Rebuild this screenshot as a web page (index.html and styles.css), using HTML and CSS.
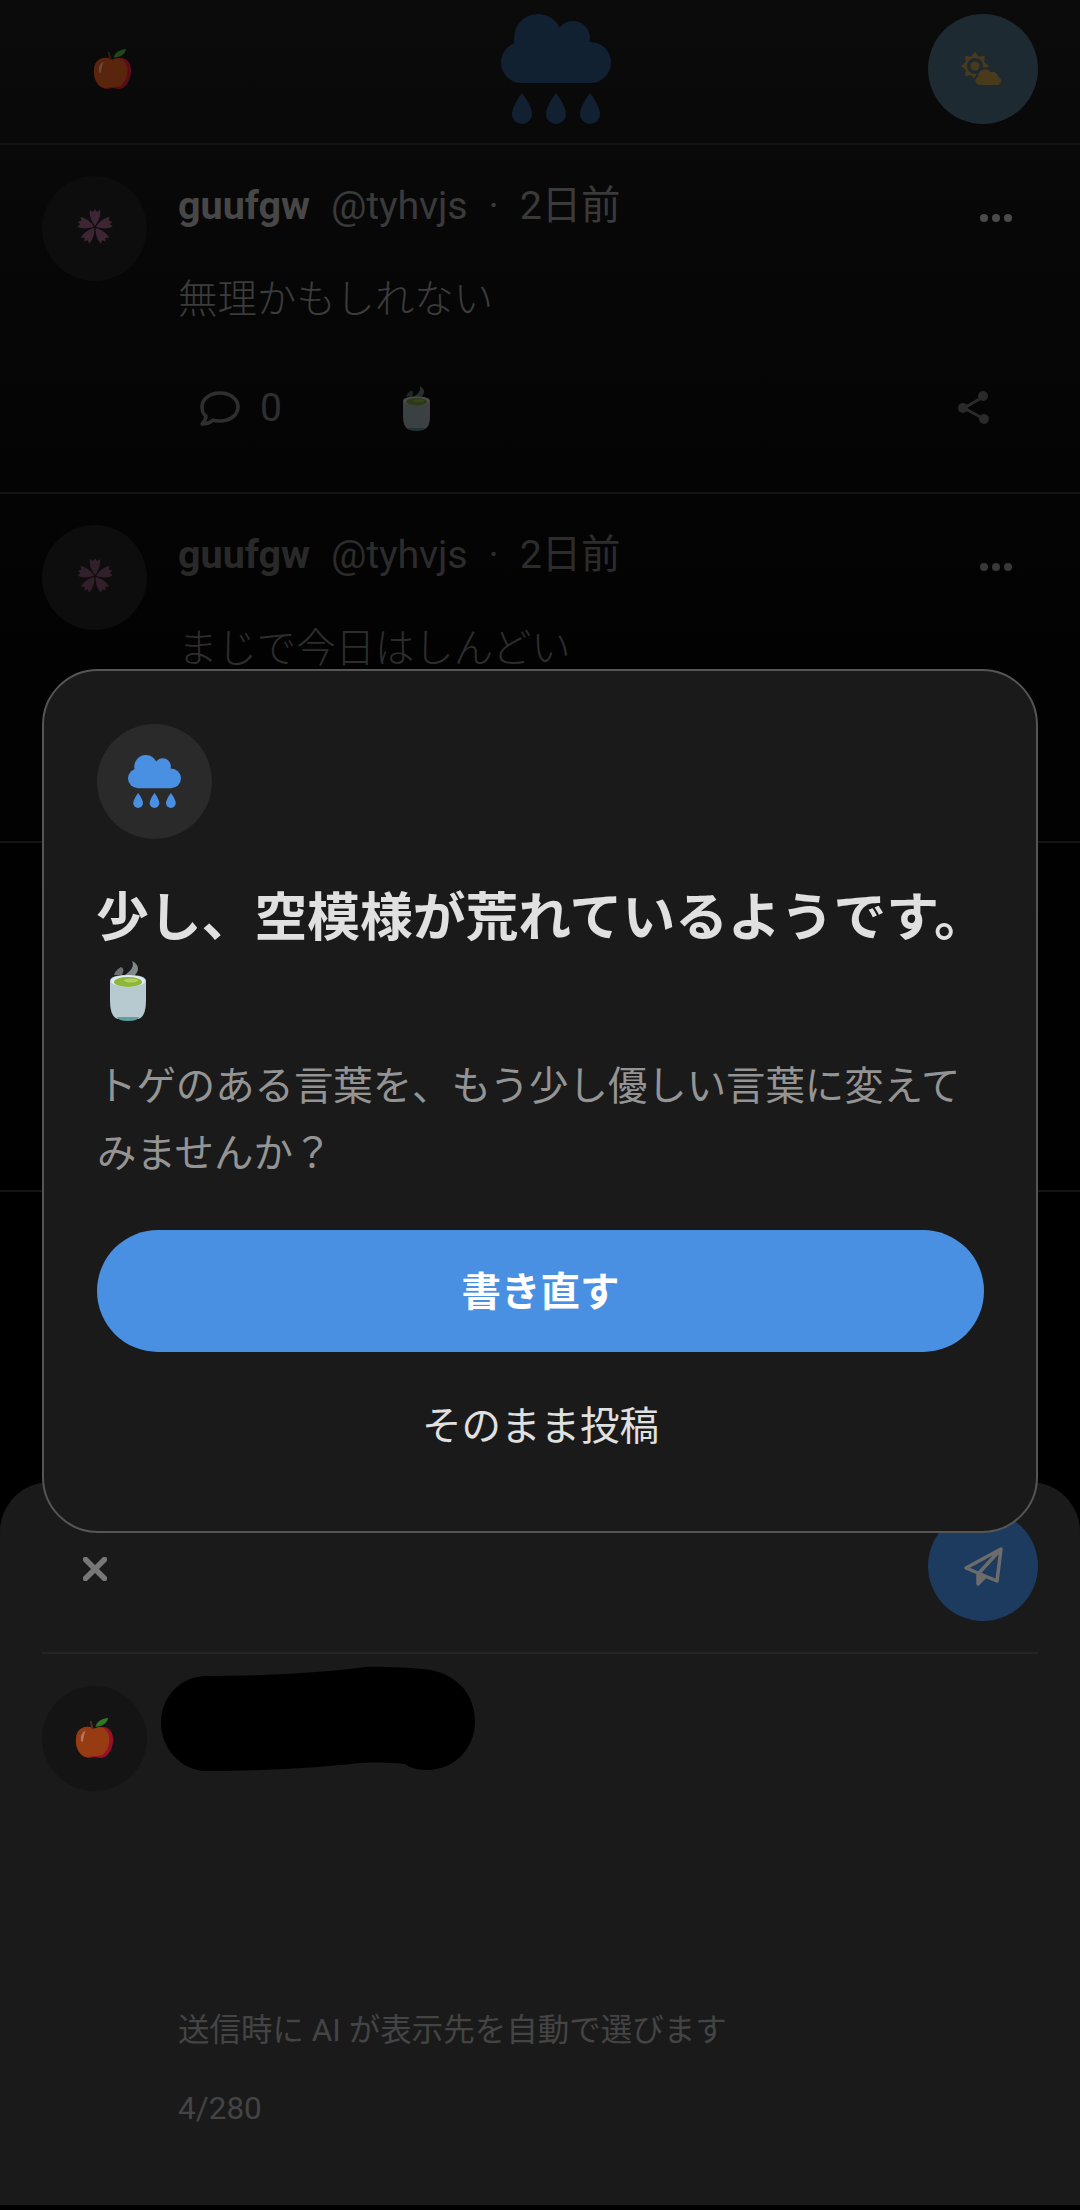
FILE: index.html
```html
<!DOCTYPE html>
<html lang="ja">
<head>
    <meta charset="UTF-8">
    <title>投稿の確認</title>
    <link rel="stylesheet" href="styles.css">
</head>
<body>
    <svg class="icon-defs" aria-hidden="true">
        <symbol id="rain" viewBox="0 0 110 110">
            <circle cx="37" cy="24" r="24"/>
            <circle cx="72" cy="24" r="17"/>
            <rect x="0" y="28" width="110" height="41" rx="20.5"/>
            <path d="M21 79C21 79 31 92 31 100A10 10 0 0 1 11 100C11 92 21 79 21 79Z"/>
            <path d="M55 79C55 79 65 92 65 100A10 10 0 0 1 45 100C45 92 55 79 55 79Z"/>
            <path d="M89 79C89 79 99 92 99 100A10 10 0 0 1 79 100C79 92 89 79 89 79Z"/>
        </symbol>
        <symbol id="tea" viewBox="0 0 36 60">
            <path d="M22 0C30 4 29 10 25 14L15 14C20 10 25 6 22 0Z" fill="#83888b"/>
            <path d="M11 6C15 8 13 11 12 14L4 14C5 10 8 8 11 6Z" fill="#6c7073"/>
            <path d="M0 20Q0 14 18 14Q36 14 36 20L36 40Q36 56 28 58L8 58Q0 56 0 40Z" fill="#b7cad0"/>
            <path d="M7 56L29 56Q28 60 18 60Q8 60 7 56Z" fill="#5f9ea3"/>
            <ellipse cx="18" cy="20" rx="17" ry="6" fill="#e0edf0"/>
            <ellipse cx="18" cy="21" rx="14" ry="5" fill="#8db63a"/>
            <ellipse cx="21" cy="19.500" rx="7" ry="2" fill="#b2d062"/>
        </symbol>
        <symbol id="apple" viewBox="0 0 40 42">
            <path d="M20 11C14 7 2 8 1 21C0 32 8 41 14 41C17 41 18 40 20 40C22 40 24 41 27 41C33 41 40 31 39 20C38 8 26 7 20 11Z" fill="#c8102e"/>
            <path d="M20 11C14 7 2 8 1 21C0 32 6 40 13 40C16 40 18 39 20 39C23 39 25 39 28 38C33 34 36 27 35 19C33 9 25 8 20 11Z" fill="#c84a12"/>
            <path d="M6 22C6 17 8 14 11 13C9 17 9 20 8 24C7 25 6 24 6 22Z" fill="#ef9f85"/>
            <path d="M21 9C22 4 28 0 34 0C33 5 28 9 21 9Z" fill="#3f9b2c"/>
            <path d="M18 11L16 3" stroke="#6b3a1e" stroke-width="2" fill="none"/>
        </symbol>
        <symbol id="sakura" viewBox="0 0 36 36">
            <g id="petal-set">
                <path id="petal" d="M18 17C14 12 12 6 13 1L16 3L18 0L20 3L23 1C24 6 22 12 18 17Z"/>
                <use href="#petal" transform="rotate(72 18 18)"/>
                <use href="#petal" transform="rotate(144 18 18)"/>
                <use href="#petal" transform="rotate(216 18 18)"/>
                <use href="#petal" transform="rotate(288 18 18)"/>
            </g>
        </symbol>
    </svg>

    <div class="screen">
        <header class="topbar">
            <div class="topbar-left">
                <svg class="apple apple-dim"><use href="#apple"/></svg>
            </div>
            <svg class="rain-big"><use href="#rain"/></svg>
            <div class="weather-btn">
                <svg width="44" height="35" viewBox="0 0 44 35">
                    <polygon points="28,14 23.2,10.2 23.9,4.1 17.8,4.8 14,0 10.2,4.8 4.1,4.1 4.8,10.2 0,14 4.8,17.8 4.1,23.900 10.2,23.2 14,28 17.8,23.2 23.9,23.9 23.2,17.8" fill="#4a3a1c"/>
                    <circle cx="14" cy="14" r="8" fill="#1e2a32"/>
                    <circle cx="14" cy="14" r="4.500" fill="#4a3a1c"/>
                    <path d="M18 34A5.500 5.500 0 0 1 16 24A8 8 0 0 1 30 19A6.500 6.500 0 0 1 38 24A5.500 5.500 0 0 1 38 34Z" fill="#4a3a1c" stroke="#1e2a32" stroke-width="2"/>
                </svg>
            </div>
        </header>

        <main class="feed">
            <article class="post">
                <div class="avatar avatar-feed">
                    <svg class="sakura"><use href="#sakura"/></svg>
                </div>
                <div class="post-main">
                    <div class="post-meta">
                        <span class="post-name">guufgw</span>
                        <span class="post-handle">@tyhvjs</span>
                        <span class="post-dot">·</span>
                        <span class="post-time">2日前</span>
                        <span class="post-more"><i></i><i></i><i></i></span>
                    </div>
                    <p class="post-body">無理かもしれない</p>
                    <div class="post-actions">
                        <svg class="act-comment" viewBox="0 0 40 35">
                            <path d="M20 2C30 2 38 8 38 16C38 24 30 30 20 30C17 30 15 30 13 29C10 32 6 33 2 33C4 31 6 28 6 25C3 23 2 19 2 16C2 8 10 2 20 2Z" fill="none" stroke="#2f2f2f" stroke-width="3.500" stroke-linejoin="round"/>
                        </svg>
                        <span class="act-count">0</span>
                        <svg class="act-tea"><use href="#tea"/></svg>
                        <svg class="act-share" viewBox="0 0 32 34">
                            <path d="M6 17L25 6M6 17L26 28" stroke="#2a2a2a" stroke-width="3"/>
                            <g fill="#2a2a2a">
                                <circle cx="5" cy="17" r="5"/>
                                <circle cx="25" cy="5" r="5"/>
                                <circle cx="26" cy="28" r="5"/>
                            </g>
                        </svg>
                    </div>
                </div>
            </article>

            <article class="post post-far">
                <div class="avatar avatar-feed">
                    <svg class="sakura"><use href="#sakura"/></svg>
                </div>
                <div class="post-main">
                    <div class="post-meta">
                        <span class="post-name">guufgw</span>
                        <span class="post-handle">@tyhvjs</span>
                        <span class="post-dot">·</span>
                        <span class="post-time">2日前</span>
                        <span class="post-more"><i></i><i></i><i></i></span>
                    </div>
                    <p class="post-body">まじで今日はしんどい</p>
                </div>
            </article>

            <article class="post"></article>
        </main>

        <section class="composer">
            <div class="composer-top">
                <div class="composer-close">
                    <svg width="24" height="24" viewBox="0 0 24 24">
                        <path d="M2.500 2.500L21.500 21.500M21.500 2.500L2.500 21.500" stroke="#777" stroke-width="5.500" stroke-linecap="round"/>
                    </svg>
                </div>
                <button class="composer-send" type="button">
                    <svg width="40" height="40" viewBox="0 0 40 40">
                        <path d="M38 3L3 22L34 35ZM38 3L15 28L15 38L22 31" fill="none" stroke="#6c6c6c" stroke-width="3.500" stroke-linejoin="round"/>
                        <path d="M15 28L15 38L22 31Z" fill="#6c6c6c"/>
                    </svg>
                </button>
            </div>
            <div class="composer-line"></div>
            <div class="composer-row">
                <div class="avatar avatar-self">
                    <svg class="apple apple-self"><use href="#apple"/></svg>
                </div>
            </div>
            <p class="composer-hint">送信時に AI が表示先を自動で選びます</p>
            <p class="composer-count">4/280</p>
            <!-- 名前を塗りつぶした跡 -->
            <svg class="scribble" width="320" height="110" viewBox="0 0 320 110">
                <path d="M46 10C90 10 150 8 204 1C225 0 245 2 262 3C295 6 314 28 314 55C314 84 292 104 266 104C255 104 248 101 244 98C225 96 205 96 190 98C150 102 100 105 46 105C20 105 0 82 0 57C0 30 20 10 46 10Z" fill="#000"/>
            </svg>
        </section>

        <div class="dialog">
            <div class="dialog-icon">
                <svg class="rain-small"><use href="#rain"/></svg>
            </div>
            <h2 class="dialog-title">少し、空模様が荒れているようです。<svg class="dialog-tea"><use href="#tea"/></svg></h2>
            <p class="dialog-text">トゲのある言葉を、もう少し優しい言葉に変えてみませんか？</p>
            <button class="btn-rewrite" type="button">書き直す</button>
            <button class="btn-post" type="button">そのまま投稿</button>
        </div>
    </div>
</body>
</html>
```

FILE: styles.css
```css
* {
    box-sizing: border-box;
}

body {
    margin: 0;
    background-color: #000;
    font-family: Roboto, 'Noto Sans CJK JP', sans-serif;
}

.icon-defs {
    display: none;
}

.screen {
    position: relative;
    width: 1080px;
    height: 2210px;
    overflow: hidden;
    background: linear-gradient(#0b0b0b 0, #060606 300px, #020202 700px, #000 1200px);
}

.topbar {
    display: flex;
    align-items: center;
    justify-content: space-between;
    height: 145px;
    padding: 0 42px 5px;
    border-bottom: 2px solid #141414;
}

.topbar-left {
    display: flex;
    justify-content: center;
    width: 142px;
}

.apple {
    display: block;
}

.apple-dim {
    width: 39px;
    height: 41px;
    margin-right: 2px;
    opacity: 0.42;
}

.rain-big {
    width: 110px;
    height: 110px;
    fill: #112132;
}

.weather-btn {
    display: flex;
    align-items: center;
    justify-content: center;
    width: 110px;
    height: 110px;
    border-radius: 50%;
    background-color: #1e2a32;
}

.post {
    display: flex;
    gap: 31px;
    height: 349px;
    padding: 31px 42px 0;
    border-bottom: 2px solid #141414;
}

.avatar {
    display: flex;
    flex-shrink: 0;
    align-items: center;
    justify-content: center;
    width: 105px;
    height: 105px;
    border-radius: 50%;
}

.avatar-feed {
    background-color: #0d0d0d;
}

.sakura {
    width: 36px;
    height: 36px;
    margin-top: -4px;
    fill: #3d2534;
}

.post-main {
    flex: 1;
}

.post-meta {
    display: flex;
    align-items: center;
    height: 58px;
    margin-top: 1px;
    font-size: 39.5px;
    line-height: 58px;
    color: #3a3a3a;
}

.post-name {
    margin-right: 21px;
    font-weight: 700;
    color: #474747;
}

.post-handle {
    letter-spacing: -0.2px;
}

.post-dot {
    margin: 0 21px;
}

.post-more {
    display: flex;
    gap: 4px;
    margin-left: auto;
    margin-right: 26px;
    padding-top: 24px;
}

.post-more i {
    width: 8px;
    height: 8px;
    border-radius: 50%;
    background-color: #4a4a4a;
}

.post-time {
    letter-spacing: -0.3px;
}

.post-body {
    margin: 35px 0 0;
    font-size: 39.4px;
    font-weight: 300;
    line-height: 60px;
    color: #3c3c3c;
}

.post-actions {
    display: flex;
    align-items: center;
    height: 60px;
    margin-top: 48px;
    font-size: 39px;
    color: #2f2f2f;
}

.act-comment {
    width: 40px;
    height: 35px;
    margin-left: 22px;
}

.act-count {
    margin-left: 20px;
}

.act-tea {
    width: 27px;
    height: 45px;
    margin-left: 121px;
    opacity: 0.3;
}

.act-share {
    width: 32px;
    height: 34px;
    margin-left: auto;
    margin-right: 48px;
}

.post-far .post-name,
.post-far .post-meta,
.post-far .post-body,
.post-far .sakura {
    opacity: 0.75;
}

.composer {
    position: absolute;
    top: 1482px;
    left: 0;
    right: 0;
    bottom: 5px;
    border-radius: 50px 50px 0 0;
    background-color: #1a1a1a;
}

.composer-top {
    display: flex;
    align-items: center;
    justify-content: space-between;
    padding: 29px 42px 0;
}

.composer-close {
    display: flex;
    justify-content: center;
    width: 105px;
    padding-top: 6px;
}

.composer-send {
    display: flex;
    align-items: center;
    justify-content: center;
    width: 110px;
    height: 110px;
    padding: 0;
    border: none;
    border-radius: 50%;
    background-color: #1d3a5f;
}

.composer-line {
    height: 2px;
    margin: 31px 42px 0;
    background-color: #252525;
}

.composer-row {
    padding: 32px 42px 0;
}

.avatar-self {
    background-color: #141414;
}

.apple-self {
    width: 39px;
    height: 41px;
    opacity: 0.72;
}

.composer-hint {
    margin: 216px 0 0 178px;
    font-size: 31.5px;
    line-height: 48px;
    color: #444;
}

.composer-count {
    margin: 30px 0 0 178px;
    font-size: 31.5px;
    line-height: 48px;
    color: #444;
}

.scribble {
    position: absolute;
    top: 184px;
    left: 161px;
}

.dialog {
    position: absolute;
    top: 669px;
    left: 42px;
    width: 996px;
    height: 864px;
    padding: 53px 52px 0 53px;
    border: 2px solid #555;
    border-radius: 56px;
    background-color: #1a1a1a;
}

.dialog-icon {
    display: flex;
    align-items: center;
    justify-content: center;
    width: 115px;
    height: 115px;
    border-radius: 50%;
    background-color: #2a2a2a;
}

.rain-small {
    width: 53px;
    height: 53px;
    fill: #4a90e2;
}

.dialog-title {
    margin: 44px -20px 0 -1px;
    font-size: 52.8px;
    font-weight: 700;
    line-height: 70px;
    color: #e0e0e0;
}

.dialog-tea {
    width: 36px;
    height: 60px;
    margin-left: 14px;
    vertical-align: -15px;
}

.dialog-text {
    margin: 30px 0 0;
    font-size: 39.4px;
    line-height: 67px;
    color: #949494;
}

.btn-rewrite,
.btn-post {
    display: block;
    width: 100%;
    height: 122px;
    padding: 0 0 5px;
    border: none;
    border-radius: 61px;
    font-family: inherit;
    font-size: 39.5px;
    cursor: pointer;
}

.btn-rewrite {
    margin-top: 43px;
    background-color: #4a90e2;
    color: #fff;
    font-weight: 700;
}

.btn-post {
    margin-top: 12px;
    background-color: transparent;
    color: #e0e0e0;
}
```
